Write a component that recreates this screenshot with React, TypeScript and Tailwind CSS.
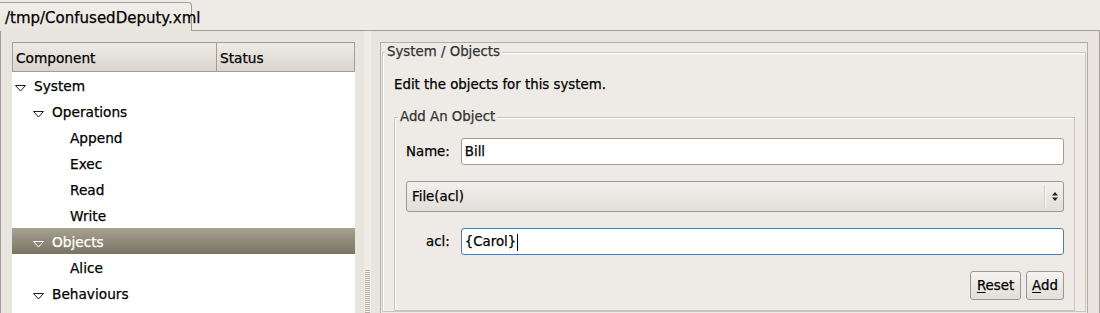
import React from "react";

type Row = { level: number; text: string; expander?: boolean; selected?: boolean };

const rows: Row[] = [
  { level: 0, text: "System", expander: true },
  { level: 1, text: "Operations", expander: true },
  { level: 2, text: "Append" },
  { level: 2, text: "Exec" },
  { level: 2, text: "Read" },
  { level: 2, text: "Write" },
  { level: 1, text: "Objects", expander: true, selected: true },
  { level: 2, text: "Alice" },
  { level: 1, text: "Behaviours", expander: true },
];

const Expander = ({ selected }: { selected?: boolean }) => (
  <svg width="11" height="7" viewBox="0 0 11 7" className="block mt-[4px]">
    <path
      d="M0.5 0.5 H10.5 L5.5 6 Z"
      fill={selected ? "none" : "#ffffff"}
      stroke={selected ? "#ffffff" : "#1e1e1e"}
      strokeWidth="1"
    />
  </svg>
);

function TreeRow({ row }: { row: Row }) {
  return (
    <div
      className={
        row.selected
          ? "h-[26px] shrink-0 flex items-center pl-[3px] pt-[2px] bg-gradient-to-b from-[#a7a291] to-[#7a7563] text-white"
          : "h-[26px] shrink-0 flex items-center pl-[3px] pt-[2px] text-black"
      }
    >
      <div style={{ width: row.level * 18 }} className="shrink-0" />
      <div className="w-[19px] shrink-0 flex items-center">
        {row.expander ? <Expander selected={row.selected} /> : null}
      </div>
      <span className="whitespace-nowrap">{row.text}</span>
    </div>
  );
}

function Entry({ value, focused }: { value: string; focused?: boolean }) {
  return (
    <div
      className={
        focused
          ? "h-[27px] flex items-center bg-white border border-[#5b7999] rounded-[3px] pl-[3px] pt-[1px]"
          : "h-[27px] flex items-center bg-white border border-[#a49c91] rounded-[3px] pl-[3px] pt-[1px]"
      }
    >
      <span className="whitespace-nowrap">{value}</span>
      {focused ? <span className="w-px h-[17px] bg-black ml-[1px]" /> : null}
    </div>
  );
}

function Combo() {
  return (
    <div className="col-span-2 h-[31px] flex items-center border border-[#a0988d] rounded-[3px] bg-gradient-to-b from-[#f3f1ee] to-[#e2ded8] pl-[5px]">
      <span className="flex-1 whitespace-nowrap pt-[1px]">File(acl)</span>
      <div className="w-px h-[23px] bg-[#d2ccc3]" />
      <div className="w-px h-[23px] bg-[#fbfaf8]" />
      <div className="w-[17px] flex items-center justify-center">
        <svg width="8" height="11" viewBox="0 0 8 11" className="block">
          <path d="M4 1 L7 4.5 H1 Z" fill="#1e1e1e" />
          <path d="M1 6.5 H7 L4 10 Z" fill="#1e1e1e" />
        </svg>
      </div>
    </div>
  );
}

function Button({ children, w }: { children: React.ReactNode; w: string }) {
  return (
    <div
      className={`${w} h-[29px] flex items-center justify-center border border-[#9e978d] rounded-[3px] bg-gradient-to-b from-[#f6f4f1] to-[#e2ded8] pt-[1px]`}
    >
      {children}
    </div>
  );
}

export default function App() {
  return (
    <div className="w-[1100px] h-[313px] overflow-hidden bg-[#eeebe7] text-[13.33px] leading-[16px] text-black font-['DejaVu_Sans',sans-serif] [-webkit-text-stroke:0.25px_currentColor] flex flex-col">
      {/* Tab strip */}
      <div className="flex h-[31px] shrink-0 items-end">
        <div className="h-[29px] w-[192px] border-t border-r border-[#a59d93] rounded-tr-[4px] bg-gradient-to-b from-[#f1eeea] to-[#e9e5df] pl-[5px] pt-[6px] text-[15px] leading-[18px] whitespace-nowrap">
          /tmp/ConfusedDeputy.xml
        </div>
        <div className="flex-1 h-full border-b border-[#a59d93]" />
      </div>

      {/* Notebook page */}
      <div className="flex flex-1 min-h-0 border-l border-r border-[#a59d93] bg-[#e8e4de] px-[11px]">
        {/* Tree view */}
        <div className="w-[343px] shrink-0 mt-[11px] bg-white flex flex-col overflow-hidden text-[13.7px]">
          <div className="h-[30px] shrink-0 flex border border-[#a59d93] bg-gradient-to-b from-[#eeebe6] to-[#dad5ce]">
            <div className="w-[204px] border-r border-[#a59d93] pl-[3px] pt-[1px] flex items-center">Component</div>
            <div className="flex-1 pl-[3px] pt-[1px] flex items-center">Status</div>
          </div>
          {rows.map((r, i) => (
            <TreeRow key={i} row={r} />
          ))}
        </div>

        {/* Paned handle */}
        <div className="w-[25px] shrink-0 flex px-[9px]">
          <div className="w-[7px] bg-[#efebe7] flex flex-col items-center">
            <div className="mt-[239px] w-[5px] h-[60px] bg-[repeating-linear-gradient(to_bottom,#b9b1a6_0px,#b9b1a6_1px,#f4f2ef_1px,#f4f2ef_2px)]" />
          </div>
        </div>

        {/* Right pane */}
        <div className="w-[708px] shrink-0 mt-[11px] border border-b-0 border-[#b5ada2] bg-[#eeebe7] px-[1px] pt-[1px] overflow-hidden">
          <fieldset className="m-0 p-0 border border-[#cbc4ba] shadow-[inset_1px_1px_0_#ffffff]">
            <legend className="ml-[2px] px-[2px] bg-[#eeebe7] text-[#333333] whitespace-nowrap">System / Objects</legend>
            <div className="pl-[11px] pr-[10px] pt-[17px]">
              <div className="whitespace-nowrap">Edit the objects for this system.</div>
              <fieldset className="mt-[16px] m-0 p-0 border border-[#cbc4ba] shadow-[inset_1px_1px_0_#ffffff]">
                <legend className="ml-[3px] px-[2px] bg-[#eeebe7] text-[#333333] whitespace-nowrap">Add An Object</legend>
                <div className="pl-[11px] pr-[10px] pt-[13px] pb-[10px]">
                  <div className="grid grid-cols-[auto_1fr] gap-x-[11px] gap-y-[16px] items-center">
                    <div className="text-right pt-[1px]">Name:</div>
                    <Entry value="Bill" />
                    <Combo />
                    <div className="text-right pt-[1px]">acl:</div>
                    <Entry value="{Carol}" focused />
                  </div>
                  <div className="flex justify-end gap-[5px] mt-[16px]">
                    <Button w="w-[51px]">
                      <span>
                        <span className="underline underline-offset-[2px]">R</span>eset
                      </span>
                    </Button>
                    <Button w="w-[38px]">
                      <span>
                        <span className="underline underline-offset-[2px]">A</span>dd
                      </span>
                    </Button>
                  </div>
                </div>
              </fieldset>
            </div>
          </fieldset>
        </div>
      </div>
    </div>
  );
}
